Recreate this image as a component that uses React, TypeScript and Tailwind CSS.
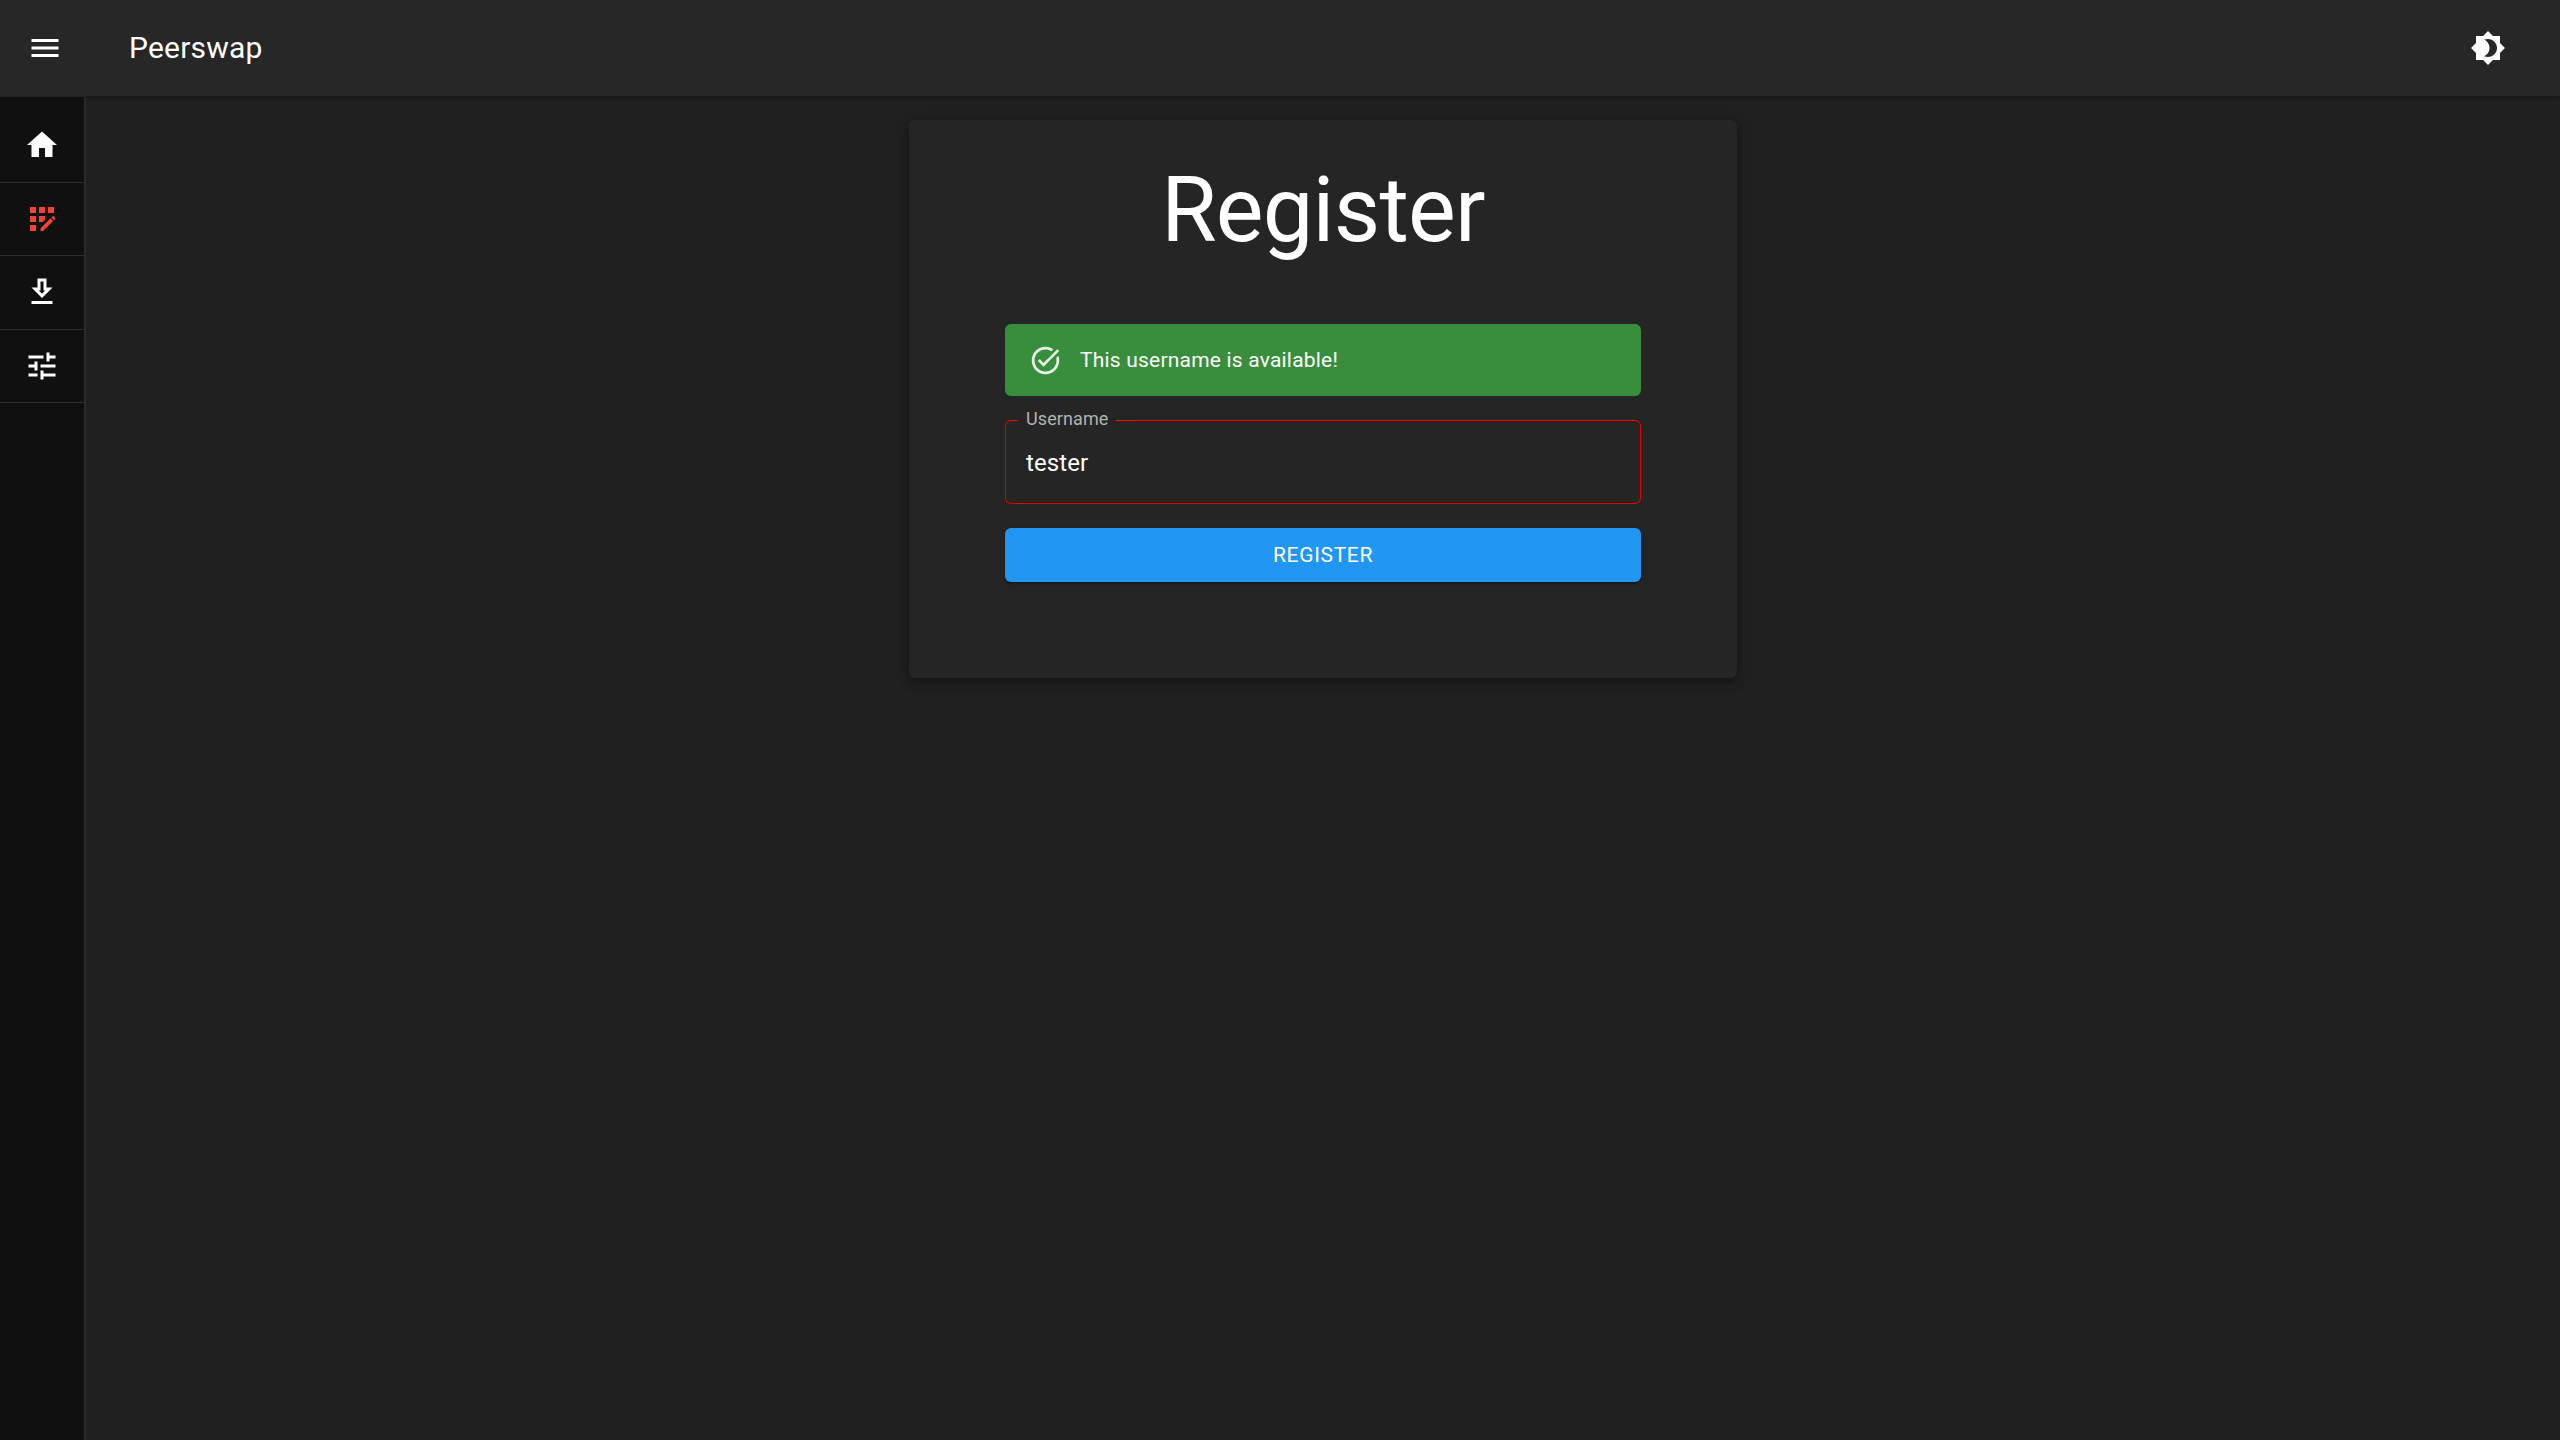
import type { ReactNode } from "react";
import { MdMenu, MdHome, MdAppRegistration, MdTune, MdBrightness4, MdOutlineTaskAlt } from "react-icons/md";

function NavItem({ children }: { children: ReactNode }) {
  return (
    <div className="box-border flex h-[73.5px] items-center justify-center border-b border-[#2e2e2e]">
      {children}
    </div>
  );
}

function DownloadOutlined() {
  return (
    <svg width="36" height="36" viewBox="0 0 24 24" fill="#fff">
      <path d="M19 9h-4V3H9v6H5l7 7 7-7zM11 5h2v6h1.17L12 13.17 9.83 11H11V5zM5 18h14v2H5z" />
    </svg>
  );
}

export default function App() {
  return (
    <div className="flex h-screen w-full flex-col overflow-hidden bg-[#202020] font-['Roboto',sans-serif] text-white">
      <header className="relative z-10 flex h-[96px] shrink-0 items-center justify-between bg-[#272727] pl-[27px] pr-[54px] shadow-[0_2px_5px_rgba(0,0,0,0.2)]">
        <div className="flex items-center">
          <MdMenu size={36} color="#fff" />
          <span className="ml-[66px] text-[30px] font-normal leading-none tracking-[0.2px]">Peerswap</span>
        </div>
        <MdBrightness4 size={36} color="#fff" />
      </header>
      <div className="flex min-h-0 flex-1">
        <aside className="box-border w-[86px] shrink-0 border-r-[2px] border-t border-[#2a2a2a] bg-[#101010] pt-[12px]">
          <NavItem><MdHome size={36} color="#fff" /></NavItem>
          <NavItem><MdAppRegistration size={36} color="#f44336" /></NavItem>
          <NavItem><DownloadOutlined /></NavItem>
          <NavItem><MdTune size={36} color="#fff" /></NavItem>
        </aside>
        <main className="flex flex-1 justify-center pt-[24px]">
          <section className="box-border h-[558px] w-[828px] rounded-[6px] bg-[#252525] px-[96px] pt-[31px] shadow-[0_3px_5px_-1px_rgba(0,0,0,0.2),0_6px_10px_0_rgba(0,0,0,0.14),0_1px_18px_0_rgba(0,0,0,0.12)]">
            <h1 className="h-[173px] text-center text-[90px] font-normal leading-[120px] tracking-[-0.75px]">Register</h1>
            <div className="flex h-[72px] items-center rounded-[6px] bg-[#388e3c] pl-[24px] text-[21px]">
              <MdOutlineTaskAlt size={33} color="#e8f3e8" />
              <span className="ml-[18px] translate-y-[1px] tracking-[0.2px]">This username is available!</span>
            </div>
            <div className="relative mt-[24px] box-border flex h-[84px] items-center rounded-[6px] border border-[#e60000] border-t-[#ff0000] px-[20px]">
              <span className="absolute left-[12px] top-[-13px] bg-[#252525] px-[8px] text-[18px] leading-[22px] tracking-[0.1px] text-[#b3b3b3]">Username</span>
              <input readOnly value="tester" className="w-full translate-y-[1px] bg-transparent text-[24px] tracking-[0.1px] text-white outline-none" />
            </div>
            <button className="mt-[24px] flex h-[54px] w-full items-center justify-center rounded-[6px] bg-[#2196f3] text-[21px] font-normal uppercase tracking-[0.65px] text-white shadow-[0_3px_1px_-2px_rgba(0,0,0,0.2),0_2px_2px_0_rgba(0,0,0,0.14),0_1px_5px_0_rgba(0,0,0,0.12)]">
              <span className="translate-y-[0.5px]">Register</span>
            </button>
          </section>
        </main>
      </div>
    </div>
  );
}
